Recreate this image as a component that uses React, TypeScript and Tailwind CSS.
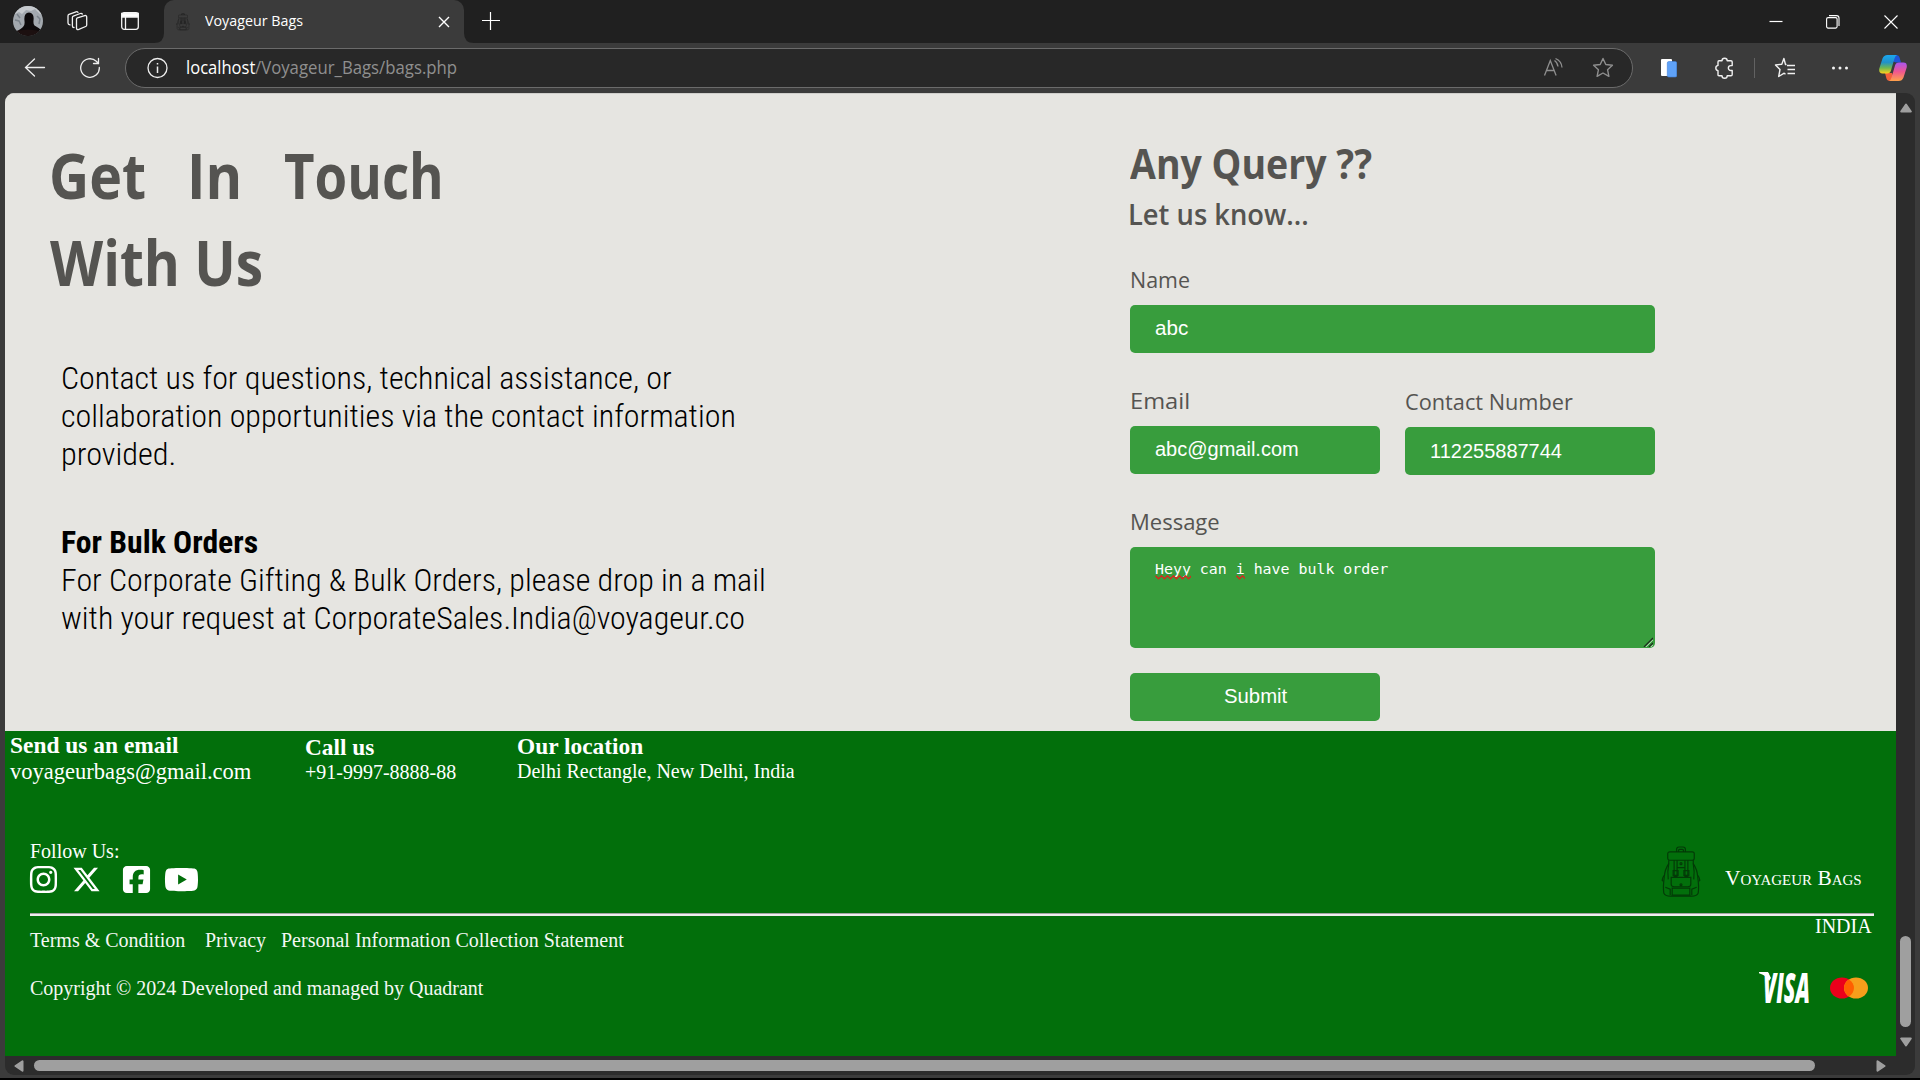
import React, { useLayoutEffect, useRef, useState } from "react";
import { FaInstagram, FaXTwitter, FaSquareFacebook, FaYoutube } from "react-icons/fa6";

/* One line of text, scaled horizontally so that it spans `width` pixels. */
function Fit({ width, className = "", children }: { width: number; className?: string; children: React.ReactNode }) {
  const ref = useRef<HTMLSpanElement>(null);
  const [scale, setScale] = useState(1);
  useLayoutEffect(() => {
    if (ref.current) setScale(width / ref.current.offsetWidth);
  }, [width]);
  return (
    <div className={`flex shrink-0 ${className}`} style={{ width }}>
      <span ref={ref} className="origin-left whitespace-pre shrink-0" style={{ transform: `scaleX(${scale})` }}>
        {children}
      </span>
    </div>
  );
}

function Backpack({ className }: { className: string }) {
  return (
    <svg viewBox="0 0 40 54" fill="none" stroke="currentColor" strokeWidth="1.2" className={className}>
      <path d="M15.500 6V3.500Q15.500 1 18 1h4q2.500 0 2.500 2.500V6" />
      <path d="M17.500 6V4.500q0-1 1-1h3q1 0 1 1V6" />
      <rect x="6.500" y="6" width="27" height="8.500" rx="2" />
      <path d="M7.500 14.500V18Q3.500 24 3 31M32.500 14.500V18q4 6 4.500 13" />
      <path d="M7.500 18Q6 26 7 34M32.500 18q1.500 8 .5 16" />
      <path d="M3 30Q1 32 .8 35L2 36M37 30q2 2 2.200 5L38 36" />
      <path d="M3 31Q1.500 42 2.500 48q1 3 7 3h21q6 0 7-3 1-6-.5-17" />
      <path d="M13 14.500V31h3V14.500M24 14.500V31h3V14.500M16 22h8" />
      <path d="M12 25h5v5h-5zM23 25h5v5h-5z" />
      <path d="M10 32h20v7q0 2.500-3 2.500H13q-3 0-3-2.500z" />
      <path d="M11 43h18v7H11zM4 42l5 2v6M36 42l-5 2v6" />
      <circle cx="20" cy="18" r="1" />
      <circle cx="20" cy="39.500" r="1" />
    </svg>
  );
}

function TabStrip() {
  return (
    <div className="flex h-[43px] shrink-0 bg-[#202020] text-white">
      <svg viewBox="0 0 30 30" className="ml-[13px] mt-[6px] h-[30px] w-[30px]">
        <clipPath id="face"><circle cx="15" cy="15" r="15" /></clipPath>
        <g clipPath="url(#face)">
          <rect width="30" height="30" fill="#a3a9af" />
          <path d="M0 9l6-3 3 2 4-4 5 1 4-2 5 5 3 1V0H0z" fill="#c6cace" />
          <path d="M2 14l4 1 2 4M24 10l3 3-1 5M4 8l3 4" stroke="#7b838b" strokeWidth="1.500" fill="none" />
          <path d="M0 26q6-1 10-5 2-1 1.500-6Q10.500 7 16 6.500q5.500.5 4.500 8-.3 4 1 5 4 2 8.500 6v5H0z" fill="#0d0a0b" />
          <path d="M0 26q15-5 30 0v5H0z" fill="#1c1010" />
        </g>
      </svg>
      <svg viewBox="0 0 22 22" fill="none" stroke="#f2f2f2" strokeWidth="1.300" strokeLinejoin="round" strokeLinecap="round" className="ml-[23px] mt-[10px] h-[22px] w-[22px]">
        <path d="M10.500 9.200q0-1 .9-1.300l7.300-2.300q2-.4 2 1.300v8q0 1.200-1 1.600l-6.900 2.900q-2.300.7-2.300-1.500z" />
        <path d="M8 17.500q-1.600 0-1.600-1.600V7.500q0-1 .9-1.400l7-2.600q1.300-.4 2 .5" />
        <path d="M4 14.900q-2-.2-2-1.800V6q0-1.200 1-1.600l7-2.600q1.300-.4 2 .5" />
      </svg>
      <svg viewBox="0 0 20 20" fill="none" stroke="#f4f4f4" strokeWidth="1.300" className="ml-[32px] mt-[11px] h-5 w-5">
        <rect x="1.700" y="1.700" width="16.600" height="16.600" rx="2.500" />
        <path d="M1.700 2.500h16.600V6H1.700z" fill="#fff" />
        <path d="M5.500 6v12" />
      </svg>
      <svg viewBox="0 0 10 10" className="ml-[14px] mt-[33px] h-[10px] w-[10px]">
        <path d="M10 0v10H0Q10 10 10 0z" fill="#3b3b3b" />
      </svg>
      <div className="flex w-[300px] rounded-t-[10px] bg-[#3b3b3b]">
        <Backpack className="ml-3 mt-[13px] h-[18px] w-[14px] text-[#1d1d1d]" />
        <Fit width={98} className="ml-[15px] h-[40px] font-['Open_Sans',sans-serif] text-[15px] leading-[40px]">Voyageur Bags</Fit>
        <svg viewBox="0 0 12 12" stroke="#fff" strokeWidth="1.400" className="ml-[135px] mt-[16px] h-3 w-3">
          <path d="M1 1l10 10M11 1L1 11" />
        </svg>
      </div>
      <svg viewBox="0 0 10 10" className="mt-[33px] h-[10px] w-[10px]">
        <path d="M0 0v10h10Q0 10 0 0z" fill="#3b3b3b" />
      </svg>
      <svg viewBox="0 0 18 18" stroke="#fff" strokeWidth="1.200" className="ml-2 mt-3 h-[18px] w-[18px]">
        <path d="M8.500 0v18M0 8.500h18" />
      </svg>
      <div className="grow" />
      <svg viewBox="0 0 14 14" stroke="#fff" strokeWidth="1.200" className="mt-[14px] h-[14px] w-[14px]">
        <path d="M.5 7.500h13" />
      </svg>
      <svg viewBox="0 0 14 14" fill="none" stroke="#fff" strokeWidth="1.100" className="ml-[43px] mt-[15px] h-[14px] w-[14px]">
        <rect x=".6" y="2.600" width="10.500" height="10.500" rx="1.500" />
        <path d="M3 .6h7.500q2.500 0 2.500 2.500V11" />
      </svg>
      <svg viewBox="0 0 14 14" stroke="#fff" strokeWidth="1.100" className="ml-[44px] mr-[22px] mt-[15px] h-[14px] w-[14px]">
        <path d="M.5.5l13 13M13.500.5l-13 13" />
      </svg>
    </div>
  );
}

const STAR = "M11 1.500l2.800 6 6.600.8-4.800 4.500 1.300 6.500L11 16l-5.900 3.300 1.300-6.500L1.600 8.300l6.600-.8z";

function Toolbar() {
  return (
    <div className="flex h-[50px] shrink-0 items-center bg-[#3b3b3b]">
      <svg viewBox="0 0 22 22" fill="none" stroke="#eee" strokeWidth="1.300" strokeLinecap="round" className="ml-[24px] h-[22px] w-[22px]">
        <path d="M20.500 10.500H1.500M10.500 2l-9 8.500 9 8.500" />
      </svg>
      <svg viewBox="0 0 22 22" fill="none" stroke="#eee" strokeWidth="1.300" strokeLinecap="round" className="ml-[33px] h-[22px] w-[22px]">
        <path d="M20.300 10.500a9.300 9.300 0 1 1-3-6.300l2 2M19.500 1.500v5h-5" />
      </svg>
      <div className="ml-[24px] flex h-[40px] w-[1508px] items-center rounded-full border border-[#6b6b6b] bg-[#282828]">
        <svg viewBox="0 0 22 22" fill="none" stroke="#eee" strokeWidth="1.300" className="ml-[20px] h-[22px] w-[22px]">
          <circle cx="11.500" cy="11" r="9.500" />
          <path d="M11.500 9.500V16M11.500 6v1.600" strokeWidth="1.500" />
        </svg>
        <Fit width={69} className="-mt-[2px] ml-[18px] font-['Open_Sans',sans-serif] text-[18px] leading-[36px] text-white">localhost</Fit>
        <Fit width={202} className="-mt-[2px] font-['Open_Sans',sans-serif] text-[18px] leading-[36px] text-[#8f8f8f]">/Voyageur_Bags/bags.php</Fit>
        <div className="grow" />
        <svg viewBox="0 0 22 22" fill="none" stroke="#8f8f8f" strokeWidth="1.300" className="h-[22px] w-[22px]">
          <path d="M1.500 18.500L7.300 3.500l5.800 15M3.500 13.500h7.700M11.500 3.500q3 2 3.500 6M12.500 1.500q6 2.500 6.500 9" />
        </svg>
        <svg viewBox="0 0 22 22" fill="none" stroke="#8f8f8f" strokeWidth="1.400" strokeLinejoin="round" className="ml-[27px] mr-[18px] h-[22px] w-[22px]">
          <path d={STAR} />
        </svg>
      </div>
      <svg viewBox="0 0 16 20" className="ml-[28px] h-5 w-4">
        <rect x="0" y="1" width="11" height="17" rx="1" fill="#fff" />
        <rect x="6.300" y="3.500" width="9.500" height="15.500" rx="1.500" fill="#5fa2f8" stroke="#3f7fd8" strokeWidth=".6" />
      </svg>
      <svg viewBox="0 0 20 22" fill="none" stroke="#f0f0f0" strokeWidth="1.400" strokeLinejoin="round" className="ml-[37px] h-[22px] w-5">
        <path d="M5 3.800h3a2.600 2.600 0 0 1 5.200 0H17q1.200 0 1.200 1.200V8.600h-1.400a2.400 2.400 0 0 0 0 4.900h1.400v4q0 1.200-1.200 1.200h-3.800a2.600 2.600 0 0 1-5.200 0H5q-1 0-1-1v-4a2.700 2.700 0 0 1 0-5.300V5q0-1.200 1-1.200z" />
      </svg>
      <div className="ml-5 h-5 w-px bg-[#626262]" />
      <svg viewBox="0 0 22 22" fill="none" stroke="#f0f0f0" strokeWidth="1.400" strokeLinejoin="round" className="ml-[19px] h-[22px] w-[22px]">
        <path d="M12.500 7.500h-1L9.900 1.500 7.800 7.300l-6.300.6L6 12.500 4.700 19.500l5.500-3.300 1.300 1M13 8.500h8M13.500 12.500H21M13.500 16.500H21" />
      </svg>
      <svg viewBox="0 0 18 6" fill="#f4f4f4" className="ml-[35px] h-[6px] w-[18px]">
        <circle cx="2.500" cy="3" r="1.500" /><circle cx="9" cy="3" r="1.500" /><circle cx="15.500" cy="3" r="1.500" />
      </svg>
      <svg viewBox="0 0 28 26" className="ml-[30px] h-[26px] w-[28px]">
        <defs>
          <linearGradient id="cpa" x1="0" y1="0" x2="0" y2="1"><stop offset="0" stopColor="#1aa7f0" /><stop offset=".4" stopColor="#2191c8" /><stop offset=".7" stopColor="#6fb84f" /><stop offset="1" stopColor="#ffd21c" /></linearGradient>
          <linearGradient id="cpb" x1="0" y1="0" x2="0" y2="1"><stop offset="0" stopColor="#a855f0" /><stop offset=".5" stopColor="#f0568f" /><stop offset="1" stopColor="#ffa24a" /></linearGradient>
        </defs>
        <path d="M13 0h4q3 0 3.700 3L22 7.500h-5L13 6z" fill="#1f55d8" />
        <path d="M6 18h7l3 8h-5q-3 0-3.700-3z" fill="#f2603a" />
        <path d="M8.500 0H18q-2 1-2.700 4L12 15.500Q11.200 18.500 8 18.500H3.500Q-.5 18.500.3 13.500L3.500 3.500Q4.800 0 8.500 0z" fill="url(#cpa)" />
        <path d="M19.500 26H10q2-1 2.700-4L16 10.500Q16.800 7.500 20 7.500h4.500q4 0 3.200 5L24.500 22.500Q23.200 26 19.500 26z" fill="url(#cpb)" />
      </svg>
    </div>
  );
}

const HEAD = "font-['Open_Sans',sans-serif] text-[#555451] [font-stretch:88%]";
const BODY = "font-['Roboto_Condensed',Roboto,sans-serif] font-light text-[32px] leading-[38px] text-black";
const LABEL = "h-[32px] font-['Open_Sans',sans-serif] text-[22.5px] leading-[34px] text-[#555451] [font-stretch:88%]";
const FIELD = "flex h-[48px] rounded-[5px] bg-[#389d3d] font-['Liberation_Sans',sans-serif] text-[20px] leading-[46px] text-white";

function GetInTouch() {
  return (
    <section className="flex w-[1125px] shrink-0 flex-col pt-[37px]">
      <div className={`ml-[44px] flex text-[63px] font-bold leading-[87px] ${HEAD}`}>
        <Fit width={97}>Get</Fit>
        <Fit width={55} className="ml-[41px]">In</Fit>
        <Fit width={160} className="ml-[42px]">Touch</Fit>
      </div>
      <div className={`ml-[45px] text-[63px] font-bold leading-[87px] ${HEAD}`}>
        <Fit width={213}>With Us</Fit>
      </div>
      <div className={`ml-[56px] mt-[54px] ${BODY}`}>
        <Fit width={611}>Contact us for questions, technical assistance, or</Fit>
        <Fit width={675}>collaboration opportunities via the contact information</Fit>
        <Fit width={115}>provided.</Fit>
      </div>
      <div className={`ml-[56px] mt-[50px] ${BODY}`}>
        <Fit width={197} className="font-bold">For Bulk Orders</Fit>
        <Fit width={705}>For Corporate Gifting &amp; Bulk Orders, please drop in a mail</Fit>
        <Fit width={684}>with your request at CorporateSales.India@voyageur.co</Fit>
      </div>
    </section>
  );
}

function Squiggle({ className, waves }: { className: string; waves: number }) {
  const d = "M.5.800" + "l3 3 3-3".repeat(waves);
  return (
    <svg fill="none" stroke="#dd241c" strokeWidth="1.300" className={`absolute top-[28px] h-[5px] ${className}`}>
      <path d={d} />
    </svg>
  );
}

function QueryForm() {
  return (
    <section className="flex w-[525px] flex-col pt-[44px]">
      <Fit width={242} className={`text-[42px] font-bold leading-[50px] ${HEAD}`}>Any Query ??</Fit>
      <Fit width={181} className={`-ml-[2px] mt-[7px] text-[29px] font-semibold leading-[38px] ${HEAD}`}>Let us know...</Fit>
      <Fit width={60} className={`mt-[30px] ${LABEL}`}>Name</Fit>
      <div className={`mt-[10px] pl-[25px] ${FIELD}`}><Fit width={33}>abc</Fit></div>
      <div className="mt-[31px] flex gap-[25px]">
        <div className="w-[250px]">
          <Fit width={60} className={LABEL}>Email</Fit>
          <div className={`mt-[10px] pl-[25px] ${FIELD}`}><Fit width={144}>abc@gmail.com</Fit></div>
        </div>
        <div className="w-[250px] pt-px">
          <Fit width={168} className={LABEL}>Contact Number</Fit>
          <div className={`mt-[10px] pl-[25px] ${FIELD}`}><Fit width={132} className="pt-px">112255887744</Fit></div>
        </div>
      </div>
      <Fit width={90} className={`mt-[30px] ${LABEL}`}>Message</Fit>
      <div className="relative mt-[10px] h-[101px] rounded-[5px] bg-[#389d3d] pl-[25px] pt-[12px]">
        <Fit width={233} className="font-['DejaVu_Sans_Mono',monospace] text-[14px] leading-[20px] text-white">Heyy can i have bulk order</Fit>
        <Squiggle className="left-[25px] w-[36px]" waves={6} />
        <Squiggle className="left-[106px] w-[9px]" waves={2} />
        <svg viewBox="0 0 10 10" className="absolute bottom-px right-[2px] h-[10px] w-[10px]">
          <path d="M1 10L10 1M6 10l4-4" stroke="#1c2b1c" strokeWidth="1.300" />
          <path d="M2.500 10.300L10.300 2.500M7.500 10.300l2.800-2.800" stroke="#cfe6d0" strokeWidth=".9" />
        </svg>
      </div>
      <div className={`mt-[25px] w-[250px] justify-center ${FIELD}`}><Fit width={63}>Submit</Fit></div>
    </section>
  );
}

function Footer() {
  return (
    <footer className="flex grow flex-col bg-[#026f0b] font-['Liberation_Serif',serif] text-[20px] leading-[24px] text-white">
      <div className="flex h-[108px] shrink-0 pl-[5px] pt-px">
        <div className="w-[295px]">
          <Fit width={169} className="text-[23px] font-bold leading-[27px]">Send us an email</Fit>
          <Fit width={241} className="text-[22.5px] leading-[26px]">voyageurbags@gmail.com</Fit>
        </div>
        <div className="w-[212px] pt-[2px]">
          <Fit width={69} className="h-[26px] text-[23px] font-bold leading-[27px]">Call us</Fit>
          <Fit width={151}>+91-9997-8888-88</Fit>
        </div>
        <div className="pt-px">
          <Fit width={126} className="h-[26px] text-[23px] font-bold leading-[27px]">Our location</Fit>
          <Fit width={278}>Delhi Rectangle, New Delhi, India</Fit>
        </div>
      </div>
      <div className="flex h-[74px] shrink-0 justify-between pl-[25px] pr-[34px]">
        <div>
          <Fit width={89}>Follow Us:</Fit>
          <div className="mt-px flex h-[30px] items-center">
            <FaInstagram className="-ml-[2px] h-[31px] w-[31px]" />
            <FaXTwitter className="ml-[13px] h-[29px] w-[29px]" />
            <FaSquareFacebook className="ml-[20px] h-[31px] w-[31px]" />
            <FaYoutube className="ml-[12px] h-[31px] w-[35px]" />
          </div>
        </div>
        <div className="flex">
          <Backpack className="mt-[7px] h-[53px] w-[40px] text-[#033a07]" />
          <Fit width={137} className="ml-[24px] mt-[27px] text-[20px] [font-variant:small-caps]">Voyageur Bags</Fit>
        </div>
      </div>
      <div className="ml-[25px] mr-[22px] h-[3px] shrink-0 border-t border-[#a5a5a5] bg-[#eeeeee]" />
      <div className="flex justify-between pl-[25px] pr-[24px]">
        <div className="pt-[12px] text-[#f4f8f4]">
          <div className="flex">
            <Fit width={155}>Terms &amp; Condition</Fit>
            <Fit width={61} className="ml-[20px]">Privacy</Fit>
            <Fit width={343} className="ml-[15px]">Personal Information Collection Statement</Fit>
          </div>
          <Fit width={453} className="mt-6">Copyright © 2024 Developed and managed by Quadrant</Fit>
        </div>
        <div className="flex flex-col items-end">
          <Fit width={57} className="-mt-[2px] text-[20px]">INDIA</Fit>
          <div className="mr-[4px] mt-[34px] flex h-[31px] items-center">
            <svg viewBox="0 0 50 31" className="h-[31px] w-[50px] overflow-visible" fill="#fff">
              <path d="M0 0h9l3 6-2 3Q7 3 0 1.200z" />
              <text x="4" y="31" textLength="47" lengthAdjust="spacingAndGlyphs" className="font-['Open_Sans',sans-serif] text-[43px] font-extrabold italic">VISA</text>
            </svg>
            <svg viewBox="0 0 38 22" className="ml-[21px] h-[22px] w-[38px]">
              <ellipse cx="12" cy="11" rx="12" ry="10.500" fill="#eb001b" />
              <ellipse cx="26" cy="11" rx="12" ry="10.500" fill="#f79e1b" />
              <path d="M19 2.500a12 10.500 0 0 1 0 17a12 10.500 0 0 1 0-17z" fill="#ff5f00" />
            </svg>
          </div>
        </div>
      </div>
    </footer>
  );
}

function Arrow({ className }: { className: string }) {
  return (
    <svg viewBox="0 0 12 10" fill="#9f9f9f" stroke="#9f9f9f" strokeWidth="2" strokeLinejoin="round" className={className}>
      <path d="M6 1.500L10.800 8.500H1.200z" />
    </svg>
  );
}

export default function App() {
  return (
    <div className="flex h-[1080px] w-[1920px] flex-col overflow-hidden border-b-2 border-black bg-[#3b3b3b]">
      <TabStrip />
      <Toolbar />
      <div className="ml-[5px] mr-[5px] flex h-[982px] shrink-0 flex-col overflow-hidden rounded-[9px] bg-[#2c2c2c]">
        <div className="flex h-[963px]">
          <main className="flex w-[1891px] shrink-0 flex-col">
            <div className="flex h-[638px] shrink-0 border-t border-[#cfcecb] bg-[#e6e5e1]">
              <GetInTouch />
              <QueryForm />
            </div>
            <Footer />
          </main>
          <div className="flex w-[19px] flex-col items-center">
            <Arrow className="mt-[10px] h-[10px] w-3" />
            <div className="mt-[823px] h-[91px] w-[11px] rounded-full bg-[#9f9f9f]" />
            <Arrow className="mt-[10px] h-[10px] w-3 rotate-180" />
          </div>
        </div>
        <div className="flex h-[19px] items-center">
          <Arrow className="ml-[8px] h-[10px] w-3 -rotate-90" />
          <div className="ml-[9px] h-[11px] w-[1781px] rounded-full bg-[#9f9f9f]" />
          <Arrow className="ml-[60px] h-[10px] w-3 rotate-90" />
        </div>
      </div>
    </div>
  );
}
